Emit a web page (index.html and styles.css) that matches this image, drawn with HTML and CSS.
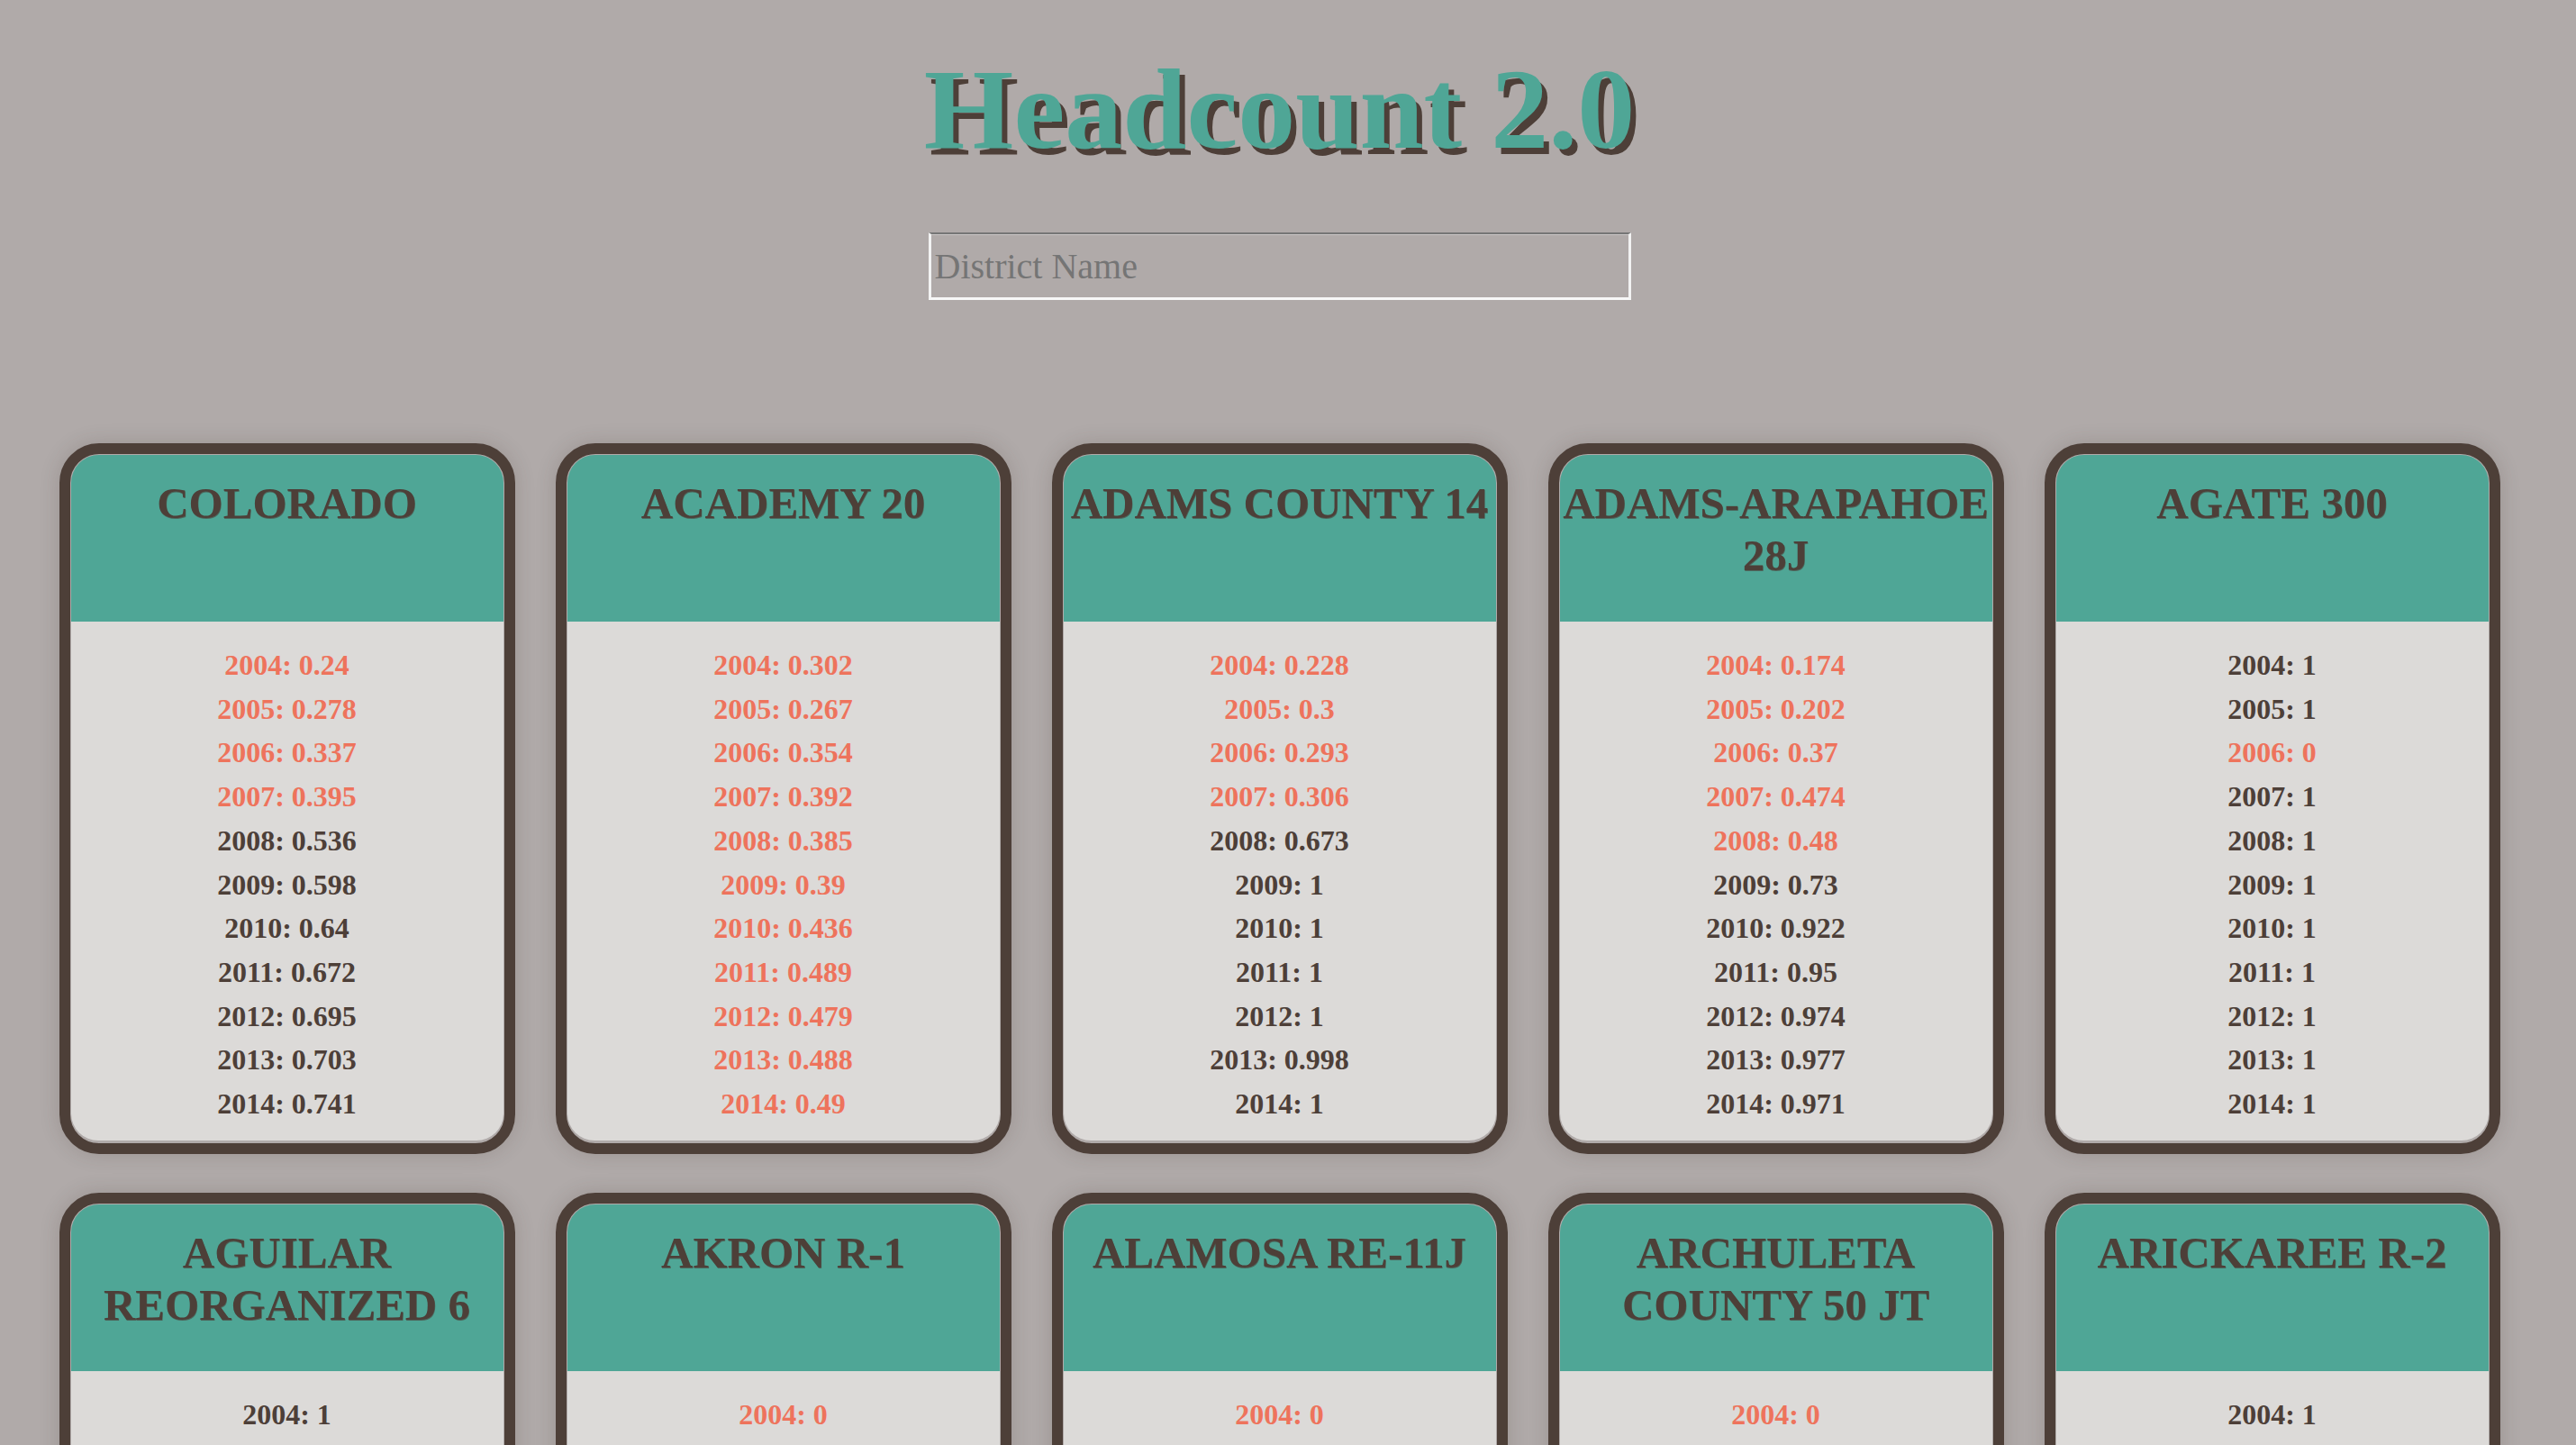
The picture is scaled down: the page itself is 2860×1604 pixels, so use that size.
FILE: index.html
```html
<!DOCTYPE html>
<html lang="en">
<head>
<meta charset="utf-8">
<title>Headcount 2.0</title>
<link rel="stylesheet" href="styles.css">
</head>
<body>
<header class="top">
  <h1 class="title">Headcount 2.0</h1>
  <input class="search" type="text" placeholder="District Name">
</header>
<main class="grid">
  <section class="card">
    <div class="card-head"><h2>COLORADO</h2></div>
    <ul class="card-body">
      <li class="low">2004: 0.24</li><li class="low">2005: 0.278</li><li class="low">2006: 0.337</li><li class="low">2007: 0.395</li><li>2008: 0.536</li><li>2009: 0.598</li><li>2010: 0.64</li><li>2011: 0.672</li><li>2012: 0.695</li><li>2013: 0.703</li><li>2014: 0.741</li>
    </ul>
  </section>
  <section class="card">
    <div class="card-head"><h2>ACADEMY 20</h2></div>
    <ul class="card-body">
      <li class="low">2004: 0.302</li><li class="low">2005: 0.267</li><li class="low">2006: 0.354</li><li class="low">2007: 0.392</li><li class="low">2008: 0.385</li><li class="low">2009: 0.39</li><li class="low">2010: 0.436</li><li class="low">2011: 0.489</li><li class="low">2012: 0.479</li><li class="low">2013: 0.488</li><li class="low">2014: 0.49</li>
    </ul>
  </section>
  <section class="card">
    <div class="card-head"><h2>ADAMS COUNTY 14</h2></div>
    <ul class="card-body">
      <li class="low">2004: 0.228</li><li class="low">2005: 0.3</li><li class="low">2006: 0.293</li><li class="low">2007: 0.306</li><li>2008: 0.673</li><li>2009: 1</li><li>2010: 1</li><li>2011: 1</li><li>2012: 1</li><li>2013: 0.998</li><li>2014: 1</li>
    </ul>
  </section>
  <section class="card">
    <div class="card-head"><h2>ADAMS-ARAPAHOE 28J</h2></div>
    <ul class="card-body">
      <li class="low">2004: 0.174</li><li class="low">2005: 0.202</li><li class="low">2006: 0.37</li><li class="low">2007: 0.474</li><li class="low">2008: 0.48</li><li>2009: 0.73</li><li>2010: 0.922</li><li>2011: 0.95</li><li>2012: 0.974</li><li>2013: 0.977</li><li>2014: 0.971</li>
    </ul>
  </section>
  <section class="card">
    <div class="card-head"><h2>AGATE 300</h2></div>
    <ul class="card-body">
      <li>2004: 1</li><li>2005: 1</li><li class="low">2006: 0</li><li>2007: 1</li><li>2008: 1</li><li>2009: 1</li><li>2010: 1</li><li>2011: 1</li><li>2012: 1</li><li>2013: 1</li><li>2014: 1</li>
    </ul>
  </section>
  <section class="card">
    <div class="card-head"><h2>AGUILAR REORGANIZED 6</h2></div>
    <ul class="card-body">
      <li>2004: 1</li><li>2005: 1</li><li>2006: 1</li><li>2007: 1</li><li>2008: 1</li><li>2009: 1</li><li>2010: 1</li><li>2011: 1</li><li>2012: 1</li><li>2013: 1</li><li>2014: 1</li>
    </ul>
  </section>
  <section class="card">
    <div class="card-head"><h2>AKRON R-1</h2></div>
    <ul class="card-body">
      <li class="low">2004: 0</li><li class="low">2005: 0</li><li class="low">2006: 0</li><li class="low">2007: 0</li><li class="low">2008: 0</li><li>2009: 1</li><li>2010: 1</li><li>2011: 1</li><li>2012: 1</li><li>2013: 1</li><li>2014: 1</li>
    </ul>
  </section>
  <section class="card">
    <div class="card-head"><h2>ALAMOSA RE-11J</h2></div>
    <ul class="card-body">
      <li class="low">2004: 0</li><li class="low">2005: 0</li><li class="low">2006: 0</li><li class="low">2007: 0</li><li>2008: 1</li><li>2009: 1</li><li>2010: 1</li><li>2011: 1</li><li>2012: 1</li><li>2013: 1</li><li>2014: 1</li>
    </ul>
  </section>
  <section class="card">
    <div class="card-head"><h2>ARCHULETA COUNTY 50 JT</h2></div>
    <ul class="card-body">
      <li class="low">2004: 0</li><li class="low">2005: 0</li><li class="low">2006: 0</li><li>2007: 1</li><li>2008: 1</li><li>2009: 1</li><li>2010: 1</li><li>2011: 1</li><li>2012: 1</li><li>2013: 1</li><li>2014: 1</li>
    </ul>
  </section>
  <section class="card">
    <div class="card-head"><h2>ARICKAREE R-2</h2></div>
    <ul class="card-body">
      <li>2004: 1</li><li>2005: 1</li><li>2006: 1</li><li>2007: 1</li><li>2008: 1</li><li>2009: 1</li><li>2010: 1</li><li>2011: 1</li><li>2012: 1</li><li>2013: 1</li><li>2014: 1</li>
    </ul>
  </section>
</main>
</body>
</html>
```
FILE: styles.css
```css
html {
  scrollbar-width: none;
  background: #b0aaa9;
}

body {
  margin: 0;
  padding: 0 19px 40px 0;
  background: #b0aaa9;
  font-family: "Liberation Serif", "Times New Roman", serif;
  color: #4d3f38;
}

.top {
  display: flex;
  flex-direction: column;
  align-items: center;
}

.title {
  margin: 48px 0 0;
  font-size: 128px;
  font-weight: bold;
  line-height: normal;
  color: #4fa696;
  text-shadow: 6px 7px 0 #4d3f38;
}

.search {
  box-sizing: border-box;
  width: 780px;
  height: 75px;
  margin-top: 63px;
  padding: 0 4px;
  font-family: "Liberation Serif", "Times New Roman", serif;
  font-size: 40px;
  color: #4d3f38;
  background: transparent;
  border-style: solid;
  border-width: 2px 3px 3px 3px;
  border-top-color: #767676;
  border-left-color: #f2f2f2;
  border-right-color: #f2f2f2;
  border-bottom-color: #f7f7f7;
  box-shadow: inset 0 1px 0 #c9c6c5;
  outline: none;
}

.search::placeholder {
  color: #757575;
}

.grid {
  display: grid;
  grid-template-columns: repeat(5, 506px);
  column-gap: 45px;
  row-gap: 43px;
  justify-content: center;
  margin-top: 159px;
}

.card {
  box-sizing: border-box;
  border: 12px solid #4d3f38;
  border-radius: 44px;
  background: #b0aaa9;
  padding: 1px 1px 3px;
  box-shadow: 0 0 22px rgba(60, 45, 40, 0.18);
  display: flex;
  flex-direction: column;
}

.card-head {
  height: 185px;
  background: #4fa696;
  border-radius: 31px 31px 0 0;
  padding-top: 25px;
  box-sizing: border-box;
}

.card-head h2 {
  margin: 0;
  font-size: 49px;
  font-weight: bold;
  line-height: 58px;
  text-align: center;
  color: #4d3f38;
  text-shadow: 0.5px 0.5px 0 rgba(77, 63, 56, 0.6);
}

.card-body {
  list-style: none;
  margin: 0;
  padding: 24px 0 16px;
  background: #dcdad8;
  border-radius: 0 0 30px 30px;
  text-align: center;
}

.card-body li {
  font-size: 32px;
  font-weight: bold;
  line-height: 48.7px;
  color: #4d3f38;
}

.card-body li.low {
  color: #ee735c;
}
```
